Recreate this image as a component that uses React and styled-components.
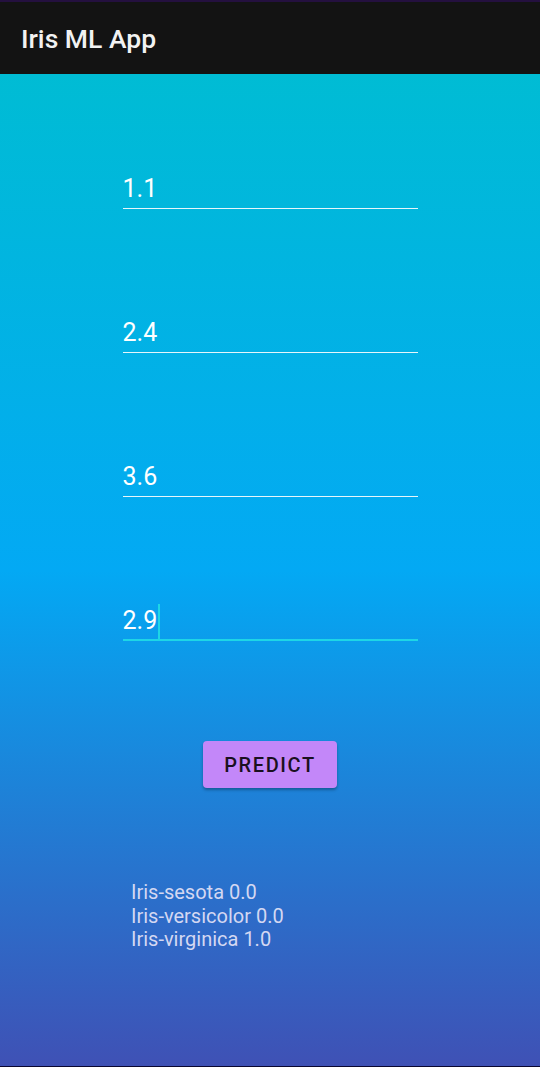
import React from 'react'
import styled, { createGlobalStyle } from 'styled-components'

const Global = createGlobalStyle`
  html, body {
    margin: 0;
    padding: 0;
  }
  body {
    font-family: Roboto, "Noto Sans", sans-serif;
  }
`

const Screen = styled.div`
  width: 540px;
  height: 1067px;
  display: flex;
  flex-direction: column;
  background: #1d0f3c;
  overflow: hidden;
`

const StatusEdge = styled.div`
  height: 2px;
  background: #24103f;
`

const Toolbar = styled.header`
  height: 72px;
  background: #131313;
  display: flex;
  align-items: center;
  padding-left: 21px;
  color: #f2f2f2;
  font-size: 26.5px;
  font-weight: 500;
`

const Content = styled.main`
  flex: 1;
  background: linear-gradient(180deg, #00bcd4 0%, #03a9f4 50%, #3f51b5 100%);
  display: flex;
  flex-direction: column;
  align-items: center;
  padding-top: 87px;
  border-bottom: 1px solid #0a0730;
`

const Fields = styled.div`
  display: flex;
  flex-direction: column;
  gap: 96px;
`

const Field = styled.div`
  width: 295px;
  height: 48px;
  box-sizing: border-box;
  display: flex;
  align-items: flex-end;
  padding-bottom: ${p => (p.focused ? 4 : 5)}px;
  border-bottom: ${p => (p.focused ? '2px solid #1ed6e6' : '1px solid #e6f6fb')};
  color: #ffffff;
  font-size: 25px;
  line-height: 28px;
`

const Caret = styled.span`
  display: inline-block;
  width: 2px;
  height: 35px;
  margin-left: 1px;
  margin-bottom: -4px;
  background: #1ed6e6;
`

const Button = styled.button`
  margin-top: 100px;
  width: 134px;
  height: 47px;
  border: none;
  border-radius: 4px;
  background: #c387f9;
  color: #1a1020;
  font-family: Roboto, sans-serif;
  font-size: 20px;
  font-weight: 500;
  letter-spacing: 1.6px;
  box-shadow: 0 2px 3px rgba(0, 0, 0, 0.3);
`

const Results = styled.div`
  align-self: flex-start;
  margin-top: 93px;
  margin-left: 131px;
  color: #d4d8f2;
  font-size: 20px;
  line-height: 23.5px;
`

const values = ['1.1', '2.4', '3.6']

export default function App() {
  return (
    <Screen>
      <Global />
      <StatusEdge />
      <Toolbar>Iris ML App</Toolbar>
      <Content>
        <Fields>
          {values.map(v => (
            <Field key={v}>{v}</Field>
          ))}
          <Field focused>
            2.9<Caret />
          </Field>
        </Fields>
        <Button>PREDICT</Button>
        <Results>
          <div>Iris-sesota 0.0</div>
          <div>Iris-versicolor 0.0</div>
          <div>Iris-virginica 1.0</div>
        </Results>
      </Content>
    </Screen>
  )
}
